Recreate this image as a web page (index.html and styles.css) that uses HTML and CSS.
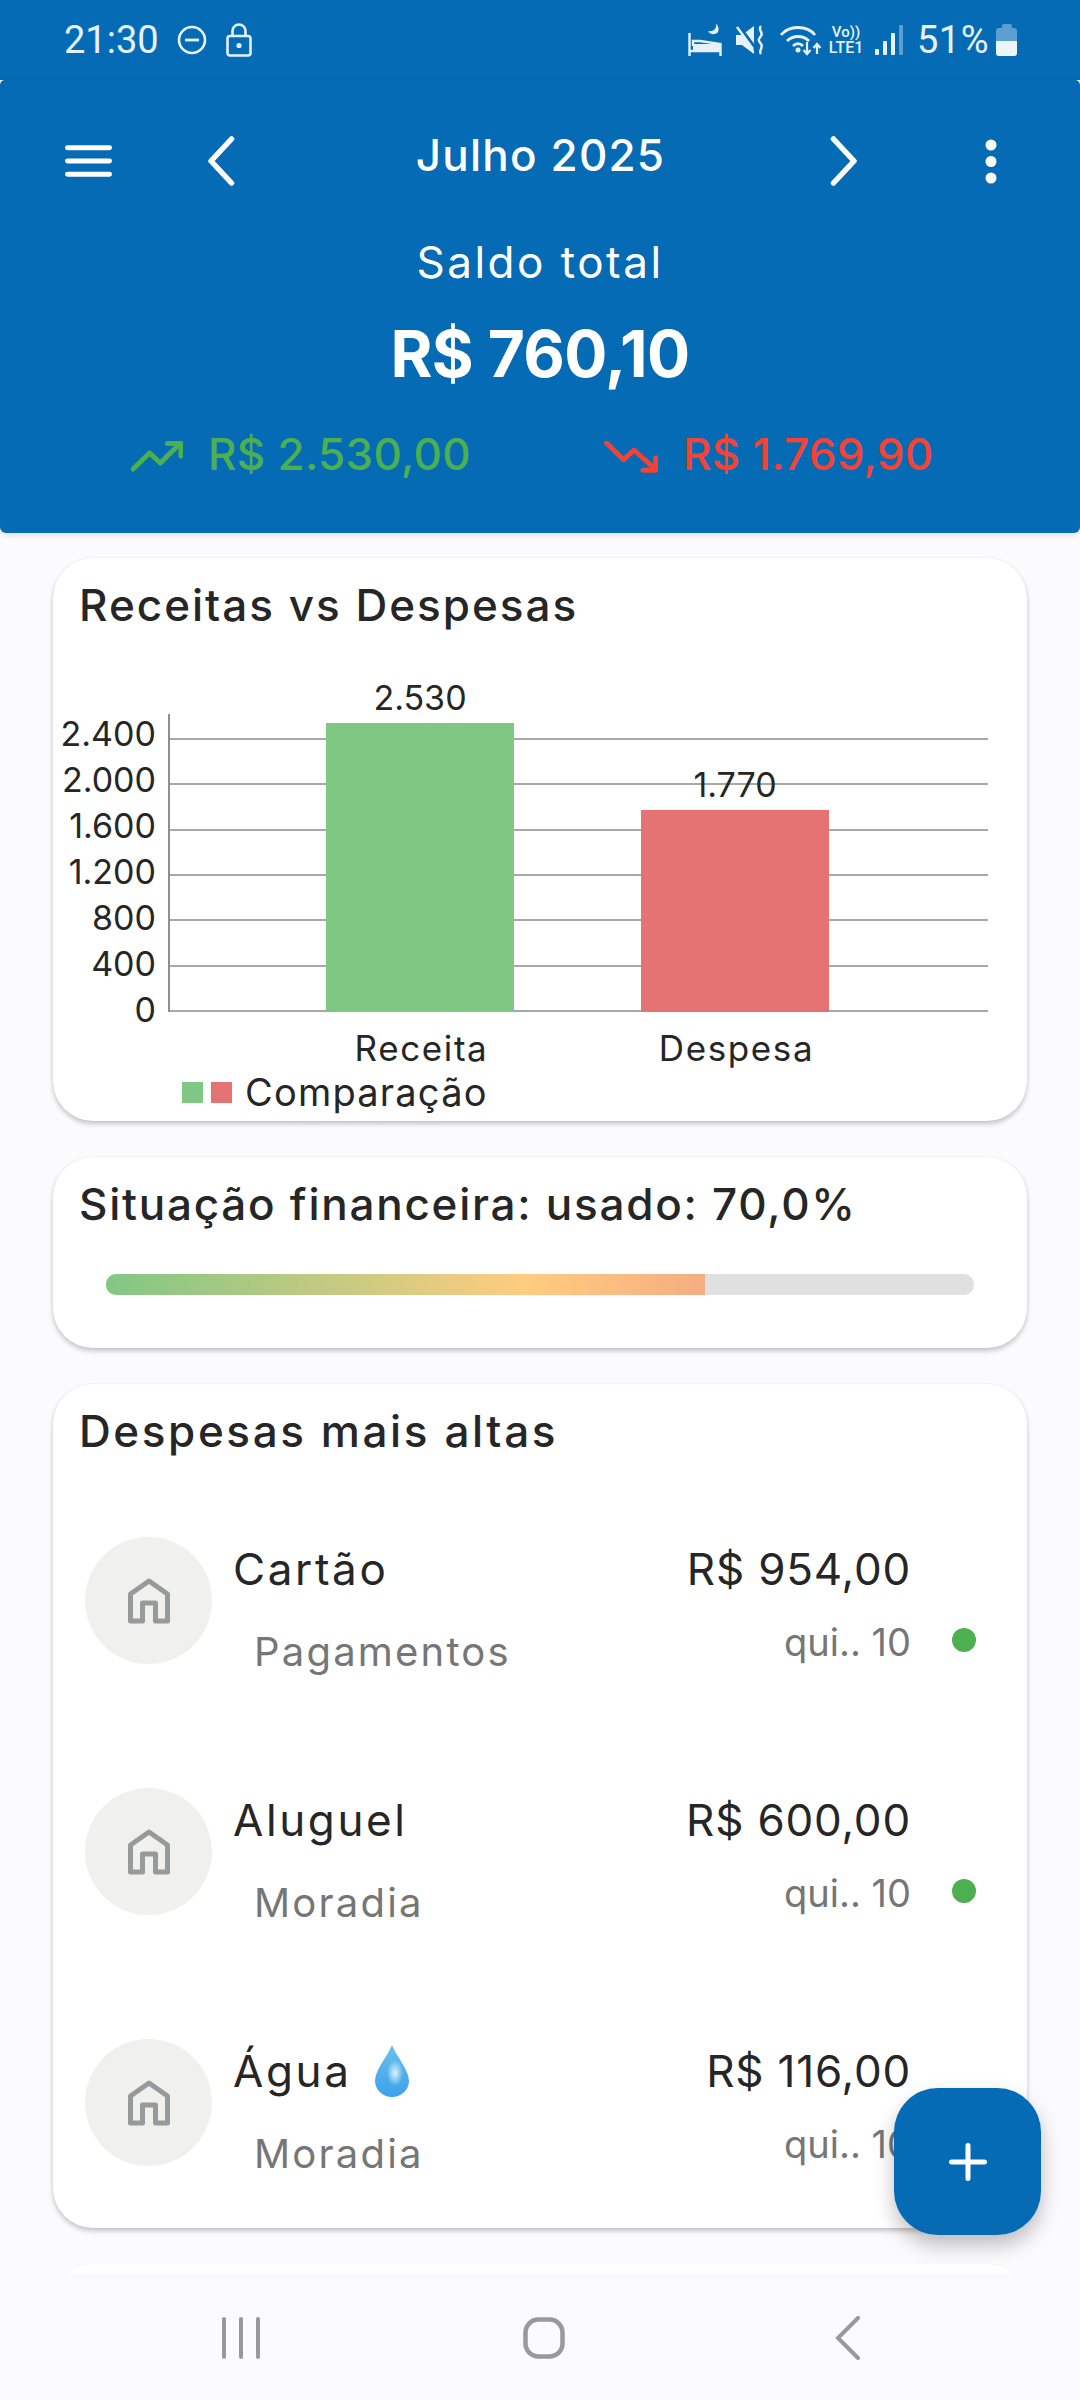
FILE: index.html
```html
<!DOCTYPE html>
<html lang="pt-BR">
<head>
<meta charset="utf-8">
<title>Julho 2025</title>
<link rel="stylesheet" href="styles.css">
</head>
<body>
<div class="screen">
  <header class="top">
    <div class="status">
      <div class="status-left">
        <span class="clock">21:30</span>
        <svg class="dnd" viewBox="0 0 30 30"><circle cx="15" cy="15" r="13" fill="none" stroke="#e6f2fb" stroke-width="2.6"/><rect x="8" y="13.6" width="14" height="2.8" fill="#e6f2fb"/></svg>
        <svg class="lock" viewBox="0 0 26 34"><rect x="1.5" y="13" width="23" height="19.5" rx="2.5" fill="none" stroke="#e6f2fb" stroke-width="2.6"/><path d="M6.5 13V8a6.5 6.5 0 0 1 13 0v5" fill="none" stroke="#e6f2fb" stroke-width="2.6"/><circle cx="13" cy="22.5" r="2.6" fill="#e6f2fb"/></svg>
      </div>
      <div class="status-right">
        <svg class="bed" viewBox="0 0 34 32"><path d="M1.500 9v23M1.500 27h31M32.500 32V20L12 17H5v5" fill="none" stroke="#e6f2fb" stroke-width="2.4"/><path d="M5 20h27v7H5z" fill="#e6f2fb"/><path d="M28 0c1 5-3 8-8 7 2 4 8 4 10 1 1.500-3 0-7-2-8z" fill="#e6f2fb"/></svg>
        <svg class="mute" viewBox="0 0 30 30"><path d="M0 10h6L18 1v28L6 20H0z" fill="#e6f2fb"/><path d="M3 2l18 24" stroke="#066bb5" stroke-width="4"/><path d="M1 2l16 22" stroke="#e6f2fb" stroke-width="2.400"/><path d="M25 1c-4 4 3 6 0 10s-3 4 0 8-3 6 0 10" fill="none" stroke="#e6f2fb" stroke-width="2.400"/></svg>
        <svg class="wifi" viewBox="0 0 42 32"><path d="M1 11C9 1 27 1 35 11M7 17c6-6 16-6 22 0M13 22c3-3 7-3 10 0" fill="none" stroke="#e6f2fb" stroke-width="2.800"/><circle cx="18" cy="26" r="2.500" fill="#e6f2fb"/><path d="M27 18v12M23.500 26l3.500 4 3.500-4M37 30V20M33.500 24l3.500-4 3.500 4" fill="none" stroke="#e6f2fb" stroke-width="2.200"/></svg>
        <span class="net"><span class="net-vo">Vo))</span><span class="net-lte">LTE1</span></span>
        <span class="signal"><i class="bar-1"></i><i class="bar-2"></i><i class="bar-3"></i><i class="bar-4"></i></span>
        <span class="pct">51%</span>
        <span class="battery"><span class="battery-cap"></span><span class="battery-body"><span class="battery-fill"></span></span></span>
      </div>
    </div>
    <div class="panel">
      <div class="appbar">
        <svg class="menu" viewBox="0 0 48 32"><path d="M2.500 2.500h43M2.500 16h43M2.500 29.500h43" stroke="#fff" stroke-width="5" stroke-linecap="round"/></svg>
        <svg class="chev-left" viewBox="0 0 28 50"><path d="M24.500 3 4 25l20.500 22" fill="none" stroke="#fff" stroke-width="5.500" stroke-linecap="round" stroke-linejoin="round"/></svg>
        <h1 class="month">Julho 2025</h1>
        <svg class="chev-right" viewBox="0 0 28 50"><path d="M3.500 3 24 25 3.500 47" fill="none" stroke="#fff" stroke-width="5.500" stroke-linecap="round" stroke-linejoin="round"/></svg>
        <svg class="dots" viewBox="0 0 12 45"><circle cx="6" cy="6" r="5.500" fill="#fff"/><circle cx="6" cy="22.500" r="5.500" fill="#fff"/><circle cx="6" cy="39" r="5.500" fill="#fff"/></svg>
      </div>
      <p class="total-label">Saldo total</p>
      <p class="total-value">R$ 760,10</p>
      <div class="flows">
        <div class="flow flow-in">
          <svg class="trend" viewBox="0 0 52 32"><path d="M2 28 18.600 12 29.300 22 48 3.500M36.400 2.500H50V15" fill="none" stroke="#4caf50" stroke-width="5" stroke-linecap="round" stroke-linejoin="round"/></svg>
          <span>R$ 2.530,00</span>
        </div>
        <div class="flow flow-out">
          <svg class="trend" viewBox="0 0 54 32"><path d="M2.500 2 19.600 18.700 30 9 50 27M39 29.300H51.700V17" fill="none" stroke="#f44336" stroke-width="5" stroke-linecap="round" stroke-linejoin="round"/></svg>
          <span>R$ 1.769,90</span>
        </div>
      </div>
    </div>
  </header>

  <main class="content">
    <section class="card card-chart">
      <h2 class="card-title">Receitas vs Despesas</h2>
      <div class="chart">
        <div class="y-labels"><span>2.400</span><span>2.000</span><span>1.600</span><span>1.200</span><span>800</span><span>400</span><span>0</span></div>
        <div class="plot">
          <div class="grid"><i></i><i></i><i></i><i></i><i></i><i></i><i></i></div>
          <div class="bars">
            <div class="bar-col">
              <span class="bar-value">2.530</span>
              <div class="bar bar-green"></div>
            </div>
            <div class="bar-col">
              <span class="bar-value">1.770</span>
              <div class="bar bar-red"></div>
            </div>
          </div>
        </div>
      </div>
      <div class="x-labels"><span>Receita</span><span>Despesa</span></div>
      <div class="legend"><i class="swatch-green"></i><i class="swatch-red"></i><span>Comparação</span></div>
    </section>

    <section class="card card-status">
      <h2 class="card-title">Situação financeira: usado: 70,0%</h2>
      <div class="progress"><div class="progress-fill" style="width:69%"></div></div>
    </section>

    <section class="card card-list">
      <h2 class="card-title">Despesas mais altas</h2>
      <div class="item">
        <div class="avatar"><svg viewBox="0 0 42 46"><path d="M21 3 39.500 16v27h-12V25h-13v18H2.500V16z" fill="none" stroke="#969a9a" stroke-width="5" stroke-linejoin="round"/></svg></div>
        <div class="item-main"><div class="item-name">Cartão</div><div class="item-cat">Pagamentos</div></div>
        <div class="item-side"><div class="item-price">R$ 954,00</div><div class="item-date">qui.. 10</div></div>
        <i class="dot"></i>
      </div>
      <div class="item">
        <div class="avatar"><svg viewBox="0 0 42 46"><path d="M21 3 39.500 16v27h-12V25h-13v18H2.500V16z" fill="none" stroke="#969a9a" stroke-width="5" stroke-linejoin="round"/></svg></div>
        <div class="item-main"><div class="item-name">Aluguel</div><div class="item-cat">Moradia</div></div>
        <div class="item-side"><div class="item-price">R$ 600,00</div><div class="item-date">qui.. 10</div></div>
        <i class="dot"></i>
      </div>
      <div class="item">
        <div class="avatar"><svg viewBox="0 0 42 46"><path d="M21 3 39.500 16v27h-12V25h-13v18H2.500V16z" fill="none" stroke="#969a9a" stroke-width="5" stroke-linejoin="round"/></svg></div>
        <div class="item-main"><div class="item-name">Água <svg class="drop" viewBox="0 0 34 52"><defs><linearGradient id="dropfill" x1="0" y1="0" x2="0" y2="1"><stop offset="0" stop-color="#6cc0ee"/><stop offset="1" stop-color="#3ba2e8"/></linearGradient><radialGradient id="dropshine" cx="0.5" cy="0.5" r="0.5"><stop offset="0" stop-color="#dff3fd"/><stop offset="1" stop-color="#dff3fd" stop-opacity="0"/></radialGradient></defs><path d="M17 0C12 12 0 25 0 36a17 16 0 0 0 34 0C34 25 22 12 17 0z" fill="url(#dropfill)"/><ellipse cx="20" cy="28" rx="8" ry="13" fill="url(#dropshine)"/></svg></div><div class="item-cat">Moradia</div></div>
        <div class="item-side"><div class="item-price">R$ 116,00</div><div class="item-date">qui.. 10</div></div>
        <i class="dot"></i>
      </div>
    </section>

    <section class="card card-next"></section>
  </main>

  <button class="fab" type="button" aria-label="Adicionar"><svg viewBox="0 0 38 38"><path d="M19 2.500v33M2.500 19h33" stroke="#fff" stroke-width="5" stroke-linecap="round"/></svg></button>

  <nav class="navbar">
    <svg class="nav-recents" viewBox="0 0 40 42"><path d="M2 2v38M19 2v38M36 2v38" stroke="#999" stroke-width="4" stroke-linecap="round"/></svg>
    <svg class="nav-home" viewBox="0 0 42 42"><rect x="2.500" y="2.500" width="37" height="37" rx="13" fill="none" stroke="#999" stroke-width="4.500"/></svg>
    <svg class="nav-back" viewBox="0 0 26 44"><path d="M23 2 3 22l20 20" fill="none" stroke="#999" stroke-width="4" stroke-linecap="round"/></svg>
  </nav>
</div>
</body>
</html>
```

FILE: styles.css
```css
* { box-sizing: border-box; }
html, body { margin: 0; padding: 0; }
body { width: 1080px; height: 2400px; overflow: hidden; background: #fbfbfe; font-family: Inter, "Noto Sans", sans-serif; color: #262626; }
.screen { position: relative; width: 1080px; height: 2400px; overflow: hidden; display: flex; flex-direction: column; background: #fbfbfe; }
p, h1, h2 { margin: 0; }

.top { height: 533px; color: #fff; display: flex; flex-direction: column; flex: none; }
.panel { height: 453px; background: #066bb5; border-radius: 5px 5px 6px 6px; box-shadow: 0 2px 6px rgba(0,0,0,.12); }

.status { height: 80px; display: flex; justify-content: space-between; padding: 0 64px; font-family: Roboto, sans-serif; color: #e6f2fb; background: #066bb5; flex: none; }
.status-left { display: flex; align-items: center; height: 80px; }
.clock { font-size: 38px; line-height: 80px; width: 113px; }
.dnd { width: 30px; height: 30px; }
.lock { width: 26px; height: 34px; margin-left: 19px; margin-top: -1px; }
.status-right { display: flex; align-items: center; margin-right: -1px; height: 80px; }
.bed { width: 34px; height: 32px; }
.mute { width: 30px; height: 30px; margin-left: 14px; }
.wifi { width: 42px; height: 32px; margin-left: 14px; }
.net { display: flex; flex-direction: column; align-items: center; width: 40px; margin-left: 4px; font-weight: 500; line-height: 15px; font-size: 15px; }
.net-vo { font-size: 15px; }
.net-lte { font-size: 16px; }
.signal { display: flex; align-items: flex-end; gap: 4px; width: 28px; height: 30px; margin-left: 9px; }
.signal i { display: block; width: 4px; background: #e6f2fb; border-radius: 1px; }
.signal .bar-1 { height: 6px; }
.signal .bar-2 { height: 14px; }
.signal .bar-3 { height: 22px; }
.signal .bar-4 { height: 30px; background: #5b9fd3; }
.pct { font-size: 38px; line-height: 80px; margin-left: 14px; letter-spacing: .5px; width: 76px; }
.battery { display: flex; flex-direction: column; align-items: center; width: 21px; margin-left: 3px; }
.battery-cap { width: 10px; height: 4px; background: #5b9fd3; border-radius: 2px 2px 0 0; }
.battery-body { display: flex; flex-direction: column; justify-content: flex-end; width: 21px; height: 28px; background: #5b9fd3; border-radius: 3px; overflow: hidden; }
.battery-fill { display: block; height: 15px; background: #edf4fa; }

.appbar { display: flex; align-items: center; height: 112px; padding: 0 0 0 65px; margin-top: 25px; }
.menu { width: 47px; height: 32px; }
.chev-left { width: 28px; height: 50px; margin-left: 95px; }
.chev-right { width: 28px; height: 50px; }
.month { width: 595px; padding-left: 16px; text-align: center; font-size: 44px; font-weight: 500; line-height: 50px; margin-top: -12px; letter-spacing: 1.2px; }
.dots { width: 12px; height: 45px; margin-left: 127px; }

.total-label { text-align: center; font-size: 44px; font-weight: 400; line-height: 50px; margin-top: 20px; letter-spacing: 2.500px; }
.total-value { text-align: center; font-size: 64px; font-weight: 700; line-height: 70px; margin-top: 32px; letter-spacing: -.6px; }
.flows { display: flex; margin-top: 40px; padding-left: 131px; }
.flow { display: flex; align-items: center; font-size: 44px; font-weight: 500; line-height: 50px; letter-spacing: .3px; }
.flow-in { color: #4caf50; width: 473px; }
.flow-out { color: #f44336; }
.trend { width: 52px; height: 32px; margin-top: 6px; }
.flow-in .trend { margin-right: 25px; }
.flow-out .trend { width: 54px; margin-right: 25px; }

.content { display: flex; flex-direction: column; padding: 25px 53px 0; gap: 36px; flex: none; }
.card { background: #fff; border-radius: 40px; box-shadow: 0 3px 5px rgba(0,0,0,.22), 0 0 2px rgba(0,0,0,.05); padding: 0 28px; flex: none; }
.card-title { font-size: 44px; font-weight: 500; line-height: 50px; color: #262626; padding-top: 22px; margin-left: -2px; }
.card-chart .card-title { letter-spacing: 2px; }
.card-status .card-title { letter-spacing: 1.75px; }
.card-list .card-title { letter-spacing: 2.600px; margin-bottom: 81px; }

.card-chart { height: 563px; position: relative; }
.chart { position: absolute; left: 0; top: 156px; width: 100%; height: 298px; }
.y-labels { position: absolute; left: 0; top: -3px; width: 103px; height: 320px; display: flex; flex-direction: column; justify-content: space-between; align-items: flex-end; font-size: 34px; line-height: 46px; color: #262626; }
.plot { position: absolute; left: 115px; top: 0; width: 820px; height: 298px; border-left: 2px solid #8f8f8f; }
.grid { position: absolute; left: 0; right: 0; top: 24px; bottom: 0; display: flex; flex-direction: column; justify-content: space-between; }
.grid i { display: block; height: 2px; background: #a8a8a8; }
.bars { position: absolute; left: 156px; right: 156px; bottom: 0; display: flex; gap: 127px; align-items: flex-end; }
.bar-col { width: 188px; display: flex; flex-direction: column; align-items: center; }
.bar-value { font-size: 34px; line-height: 46px; color: #262626; margin-bottom: 2px; }
.bar { width: 188px; }
.bar-green { height: 289px; background: #81c784; }
.bar-red { height: 202px; background: #e57373; }
.x-labels { position: absolute; left: 211px; top: 467px; display: flex; font-size: 35px; line-height: 46px; letter-spacing: 1.6px; color: #262626; }
.x-labels span { width: 315px; text-align: center; }
.legend { position: absolute; left: 129px; top: 511px; display: flex; align-items: center; font-size: 38px; line-height: 46px; color: #262626; }
.legend i { display: block; width: 21px; height: 21px; margin-right: 8px; }
.legend span { margin-left: 5px; letter-spacing: 1.2px; }
.swatch-green { background: #81c784; }
.swatch-red { background: #e57373; }

.card-status { height: 191px; }
.progress { height: 21px; margin: 45px 25px 0; background: #e0e0e0; border-radius: 10px; overflow: hidden; }
.progress-fill { height: 21px; background: linear-gradient(90deg, #81c784 0%, #ffcc80 70%, #f5ad82 100%); }

.card-list { height: 844px; }
.item { display: flex; height: 251px; padding-left: 4px; }
.avatar { width: 127px; height: 127px; border-radius: 50%; background: #f0f1ec; display: flex; align-items: center; justify-content: center; flex: none; }
.avatar svg { width: 42px; height: 46px; margin-top: 1px; }
.item-main { width: 459px; padding-left: 21px; }
.item-name { font-size: 44px; line-height: 54px; margin-top: 5px; display: flex; align-items: center; gap: 9px; white-space: pre; letter-spacing: 2.600px; }
.drop { width: 34px; height: 52px; }
.item-cat { font-size: 40px; line-height: 50px; color: #767676; padding-left: 21px; margin-top: 31px; letter-spacing: 2.2px; }
.item-side { width: 270px; margin-left: -30px; text-align: right; flex: none; }
.item-price { font-size: 44px; line-height: 54px; margin-top: 5px; letter-spacing: .8px; }
.item-date { font-size: 38px; line-height: 50px; color: #767676; margin-top: 21px; }
.dot { display: block; width: 24px; height: 24px; border-radius: 50%; background: #4caf50; margin: 91px 0 0 41px; flex: none; }

.card-next { height: 200px; box-shadow: 0 0 2px rgba(0,0,0,.06); }

.fab { position: absolute; left: 894px; top: 2088px; width: 147px; height: 147px; border: 0; padding: 0; border-radius: 44px; background: #066bb5; display: flex; align-items: center; justify-content: center; box-shadow: 0 10px 20px rgba(0,0,0,.25); }
.fab svg { width: 38px; height: 38px; }

.navbar { position: absolute; left: 0; right: 0; bottom: 0; height: 126px; background: #fbfbfe; }
.nav-recents { position: absolute; left: 222px; top: 43px; width: 40px; height: 42px; }
.nav-home { position: absolute; left: 523px; top: 43px; width: 42px; height: 42px; }
.nav-back { position: absolute; left: 835px; top: 42px; width: 26px; height: 44px; }
```
